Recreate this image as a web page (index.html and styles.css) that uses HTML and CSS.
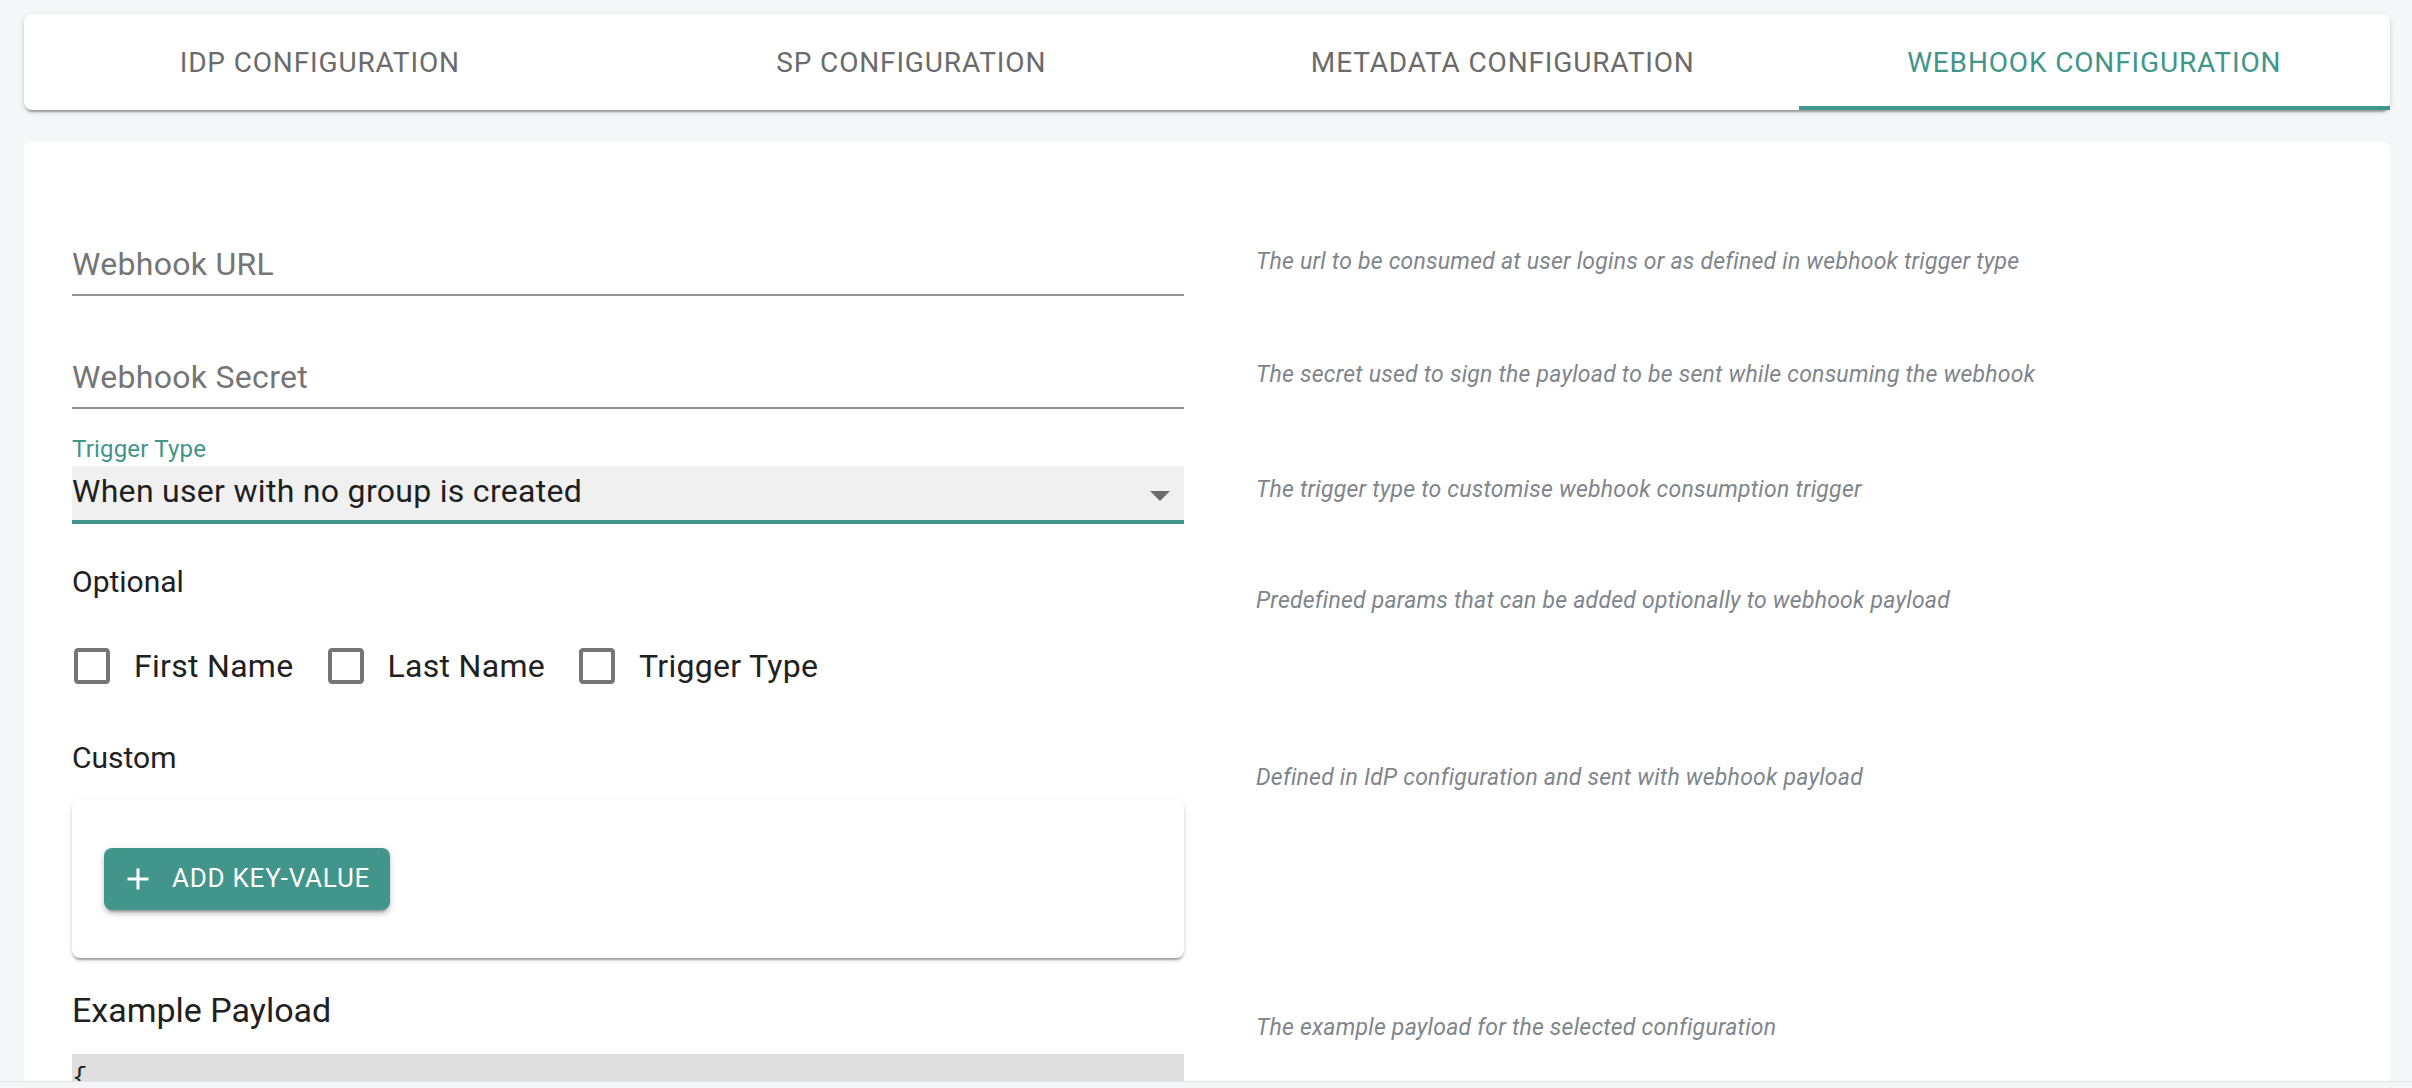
FILE: index.html
```html
<!DOCTYPE html>
<html lang="en">
<head>
<meta charset="utf-8">
<title>Webhook Configuration</title>
<link rel="stylesheet" href="styles.css">
</head>
<body>
<div class="page">
  <nav class="tabs">
    <div class="tab">IDP Configuration</div>
    <div class="tab">SP Configuration</div>
    <div class="tab">Metadata Configuration</div>
    <div class="tab tab-active">Webhook Configuration</div>
  </nav>

  <section class="card">
    <div class="row">
      <div class="field">
        <div class="input">Webhook URL</div>
      </div>
      <p class="desc desc-a">The url to be consumed at user logins or as defined in webhook trigger type</p>
    </div>

    <div class="row row-b">
      <div class="field">
        <div class="input">Webhook Secret</div>
      </div>
      <p class="desc desc-a">The secret used to sign the payload to be sent while consuming the webhook</p>
    </div>

    <div class="row row-c">
      <div class="select-field">
        <div class="select-label">Trigger Type</div>
        <div class="select">
          <span>When user with no group is created</span>
          <svg class="select-arrow" viewBox="0 0 24 24" width="48" height="48"><path d="M7 10l5 5 5-5z"/></svg>
        </div>
      </div>
      <p class="desc desc-c">The trigger type to customise webhook consumption trigger</p>
    </div>

    <div class="row row-d">
      <div>
        <div class="section-title">Optional</div>
        <div class="checks">
          <label class="check">
            <span class="check-icon"><svg viewBox="0 0 24 24" width="48" height="48"><path d="M19 5v14H5V5h14m0-2H5c-1.11 0-2 .9-2 2v14c0 1.1.89 2 2 2h14c1.1 0 2-.9 2-2V5c0-1.1-.9-2-2-2z"/></svg></span>
            <span class="check-text">First Name</span>
          </label>
          <label class="check">
            <span class="check-icon"><svg viewBox="0 0 24 24" width="48" height="48"><path d="M19 5v14H5V5h14m0-2H5c-1.11 0-2 .9-2 2v14c0 1.1.89 2 2 2h14c1.1 0 2-.9 2-2V5c0-1.1-.9-2-2-2z"/></svg></span>
            <span class="check-text">Last Name</span>
          </label>
          <label class="check">
            <span class="check-icon"><svg viewBox="0 0 24 24" width="48" height="48"><path d="M19 5v14H5V5h14m0-2H5c-1.11 0-2 .9-2 2v14c0 1.1.89 2 2 2h14c1.1 0 2-.9 2-2V5c0-1.1-.9-2-2-2z"/></svg></span>
            <span class="check-text">Trigger Type</span>
          </label>
        </div>
      </div>
      <p class="desc desc-d">Predefined params that can be added optionally to webhook payload</p>
    </div>

    <div class="row row-e">
      <div>
        <div class="section-title">Custom</div>
        <div class="paper">
          <button class="btn" type="button">
            <svg class="btn-icon" viewBox="0 0 24 24" width="36" height="36"><path d="M19 13h-6v6h-2v-6H5v-2h6V5h2v6h6v2z"/></svg>
            <span>Add Key-Value</span>
          </button>
        </div>
      </div>
      <p class="desc desc-e">Defined in IdP configuration and sent with webhook payload</p>
    </div>

    <div class="row">
      <div>
        <div class="payload-title">Example Payload</div>
<pre class="code">{
  "firstName": "John",
  "lastName": "Doe",
  "triggerType": "USER_WITH_NO_GROUP"
}</pre>
      </div>
      <p class="desc desc-e">The example payload for the selected configuration</p>
    </div>
  </section>
</div>
<div class="bottom-edge"></div>
</body>
</html>
```

FILE: styles.css
```css
html, body {
  margin: 0;
  padding: 0;
  overflow: hidden;
  height: 100%;
}

body {
  background: #f6f7f9;
  font-family: Roboto, "Liberation Sans", Arial, sans-serif;
  color: #212121;
}

.page {
  padding: 14px 22px 0 24px;
}

/* Tabs */
.tabs {
  display: flex;
  height: 96px;
  background: #fff;
  border-radius: 8px;
  box-shadow: 0 4px 2px -2px rgba(0,0,0,0.2), 0 2px 2px 0 rgba(0,0,0,0.14), 0 2px 6px 0 rgba(0,0,0,0.12);
  margin-bottom: 32px;
}

.tab {
  flex: 1;
  display: flex;
  align-items: center;
  justify-content: center;
  font-size: 28px;
  font-weight: 400;
  letter-spacing: 0.85px;
  text-transform: uppercase;
  color: #6b6b6b;
  box-sizing: border-box;
}

.tab-active {
  color: #41958a;
  border-bottom: 4px solid #41958a;
  padding-top: 4px;
}

/* Main card */
.card {
  background: #fff;
  border-radius: 8px;
  padding: 58px 48px 200px 48px;
  box-shadow: 0 2px 2px -2px rgba(0,0,0,0.12);
}

.row {
  display: grid;
  grid-template-columns: 1112px 1fr;
  column-gap: 72px;
  margin-bottom: 17px;
}

.row-b { margin-bottom: 25px; }
.row-c { margin-bottom: 35px; }
.row-d { margin-bottom: 27px; }
.row-e { margin-bottom: 27px; }

.desc {
  margin: 0;
  font-size: 23px;
  line-height: 34px;
  letter-spacing: 0.23px;
  font-style: italic;
  color: #80858c;
}

.desc-a { padding-top: 45px; }
.desc-c { padding-top: 39px; }
.desc-d { padding-top: 25px; }
.desc-e { padding-top: 26px; }

/* Text fields */
.field {
  padding-top: 32px;
}

.input {
  height: 64px;
  box-sizing: border-box;
  padding-top: 16px;
  font-size: 32px;
  line-height: 32px;
  letter-spacing: 0.3px;
  color: #757575;
  border-bottom: 2px solid #949494;
}

/* Select */
.select-label {
  margin-top: 3px;
  font-size: 24px;
  line-height: 24px;
  letter-spacing: 0.2px;
  color: #41958a;
}

.select {
  position: relative;
  margin-top: 5px;
  height: 58px;
  box-sizing: border-box;
  padding-top: 6px;
  background: #f0f0f0;
  border-bottom: 4px solid #41958a;
  font-size: 32px;
  line-height: 38px;
  letter-spacing: 0.3px;
  color: #1f1f1f;
}

.select-arrow {
  position: absolute;
  right: 0;
  top: 5px;
  fill: #6b6b6b;
}

/* Section titles */
.section-title {
  font-size: 30px;
  line-height: 45px;
  color: #212121;
}

.checks {
  display: flex;
  margin-top: 20px;
  margin-left: -22px;
}

.check {
  display: flex;
  align-items: center;
  margin-right: 10px;
}

.check-icon {
  display: flex;
  padding: 18px;
}

.check-icon svg {
  fill: #757575;
}

.check-text {
  font-size: 32px;
  line-height: 48px;
  letter-spacing: 0.3px;
  color: #212121;
}

/* Paper with button */
.paper {
  margin-top: 20px;
  background: #fff;
  border-radius: 8px;
  padding: 48px 32px;
  box-shadow: 0 4px 2px -2px rgba(0,0,0,0.2), 0 2px 2px 0 rgba(0,0,0,0.14), 0 2px 6px 0 rgba(0,0,0,0.12);
}

.btn {
  display: inline-flex;
  align-items: center;
  padding: 8px 20px;
  border: 0;
  border-radius: 8px;
  background: #41958a;
  color: #fff;
  font-family: Roboto, "Liberation Sans", Arial, sans-serif;
  font-size: 26px;
  font-weight: 400;
  line-height: 45.5px;
  letter-spacing: 0.75px;
  text-transform: uppercase;
  box-shadow: 0 6px 2px -4px rgba(0,0,0,0.2), 0 4px 4px 0 rgba(0,0,0,0.14), 0 2px 10px 0 rgba(0,0,0,0.12);
}

.btn-icon {
  fill: #fff;
  margin-left: -4px;
  margin-right: 16px;
}

/* Payload */
.payload-title {
  font-size: 34px;
  line-height: 51px;
  color: #212121;
}

.code {
  margin: 18px 0 0 0;
  padding: 6px 0 0 0;
  background: #dedede;
  font-family: "Liberation Mono", "DejaVu Sans Mono", monospace;
  font-size: 26px;
  line-height: 36px;
  color: #1f1f1f;
}

.bottom-edge {
  position: fixed;
  left: 0;
  right: 0;
  bottom: 0;
  height: 6px;
  background: #f4f5f7;
  border-top: 1px solid #e4e4e4;
}
```
